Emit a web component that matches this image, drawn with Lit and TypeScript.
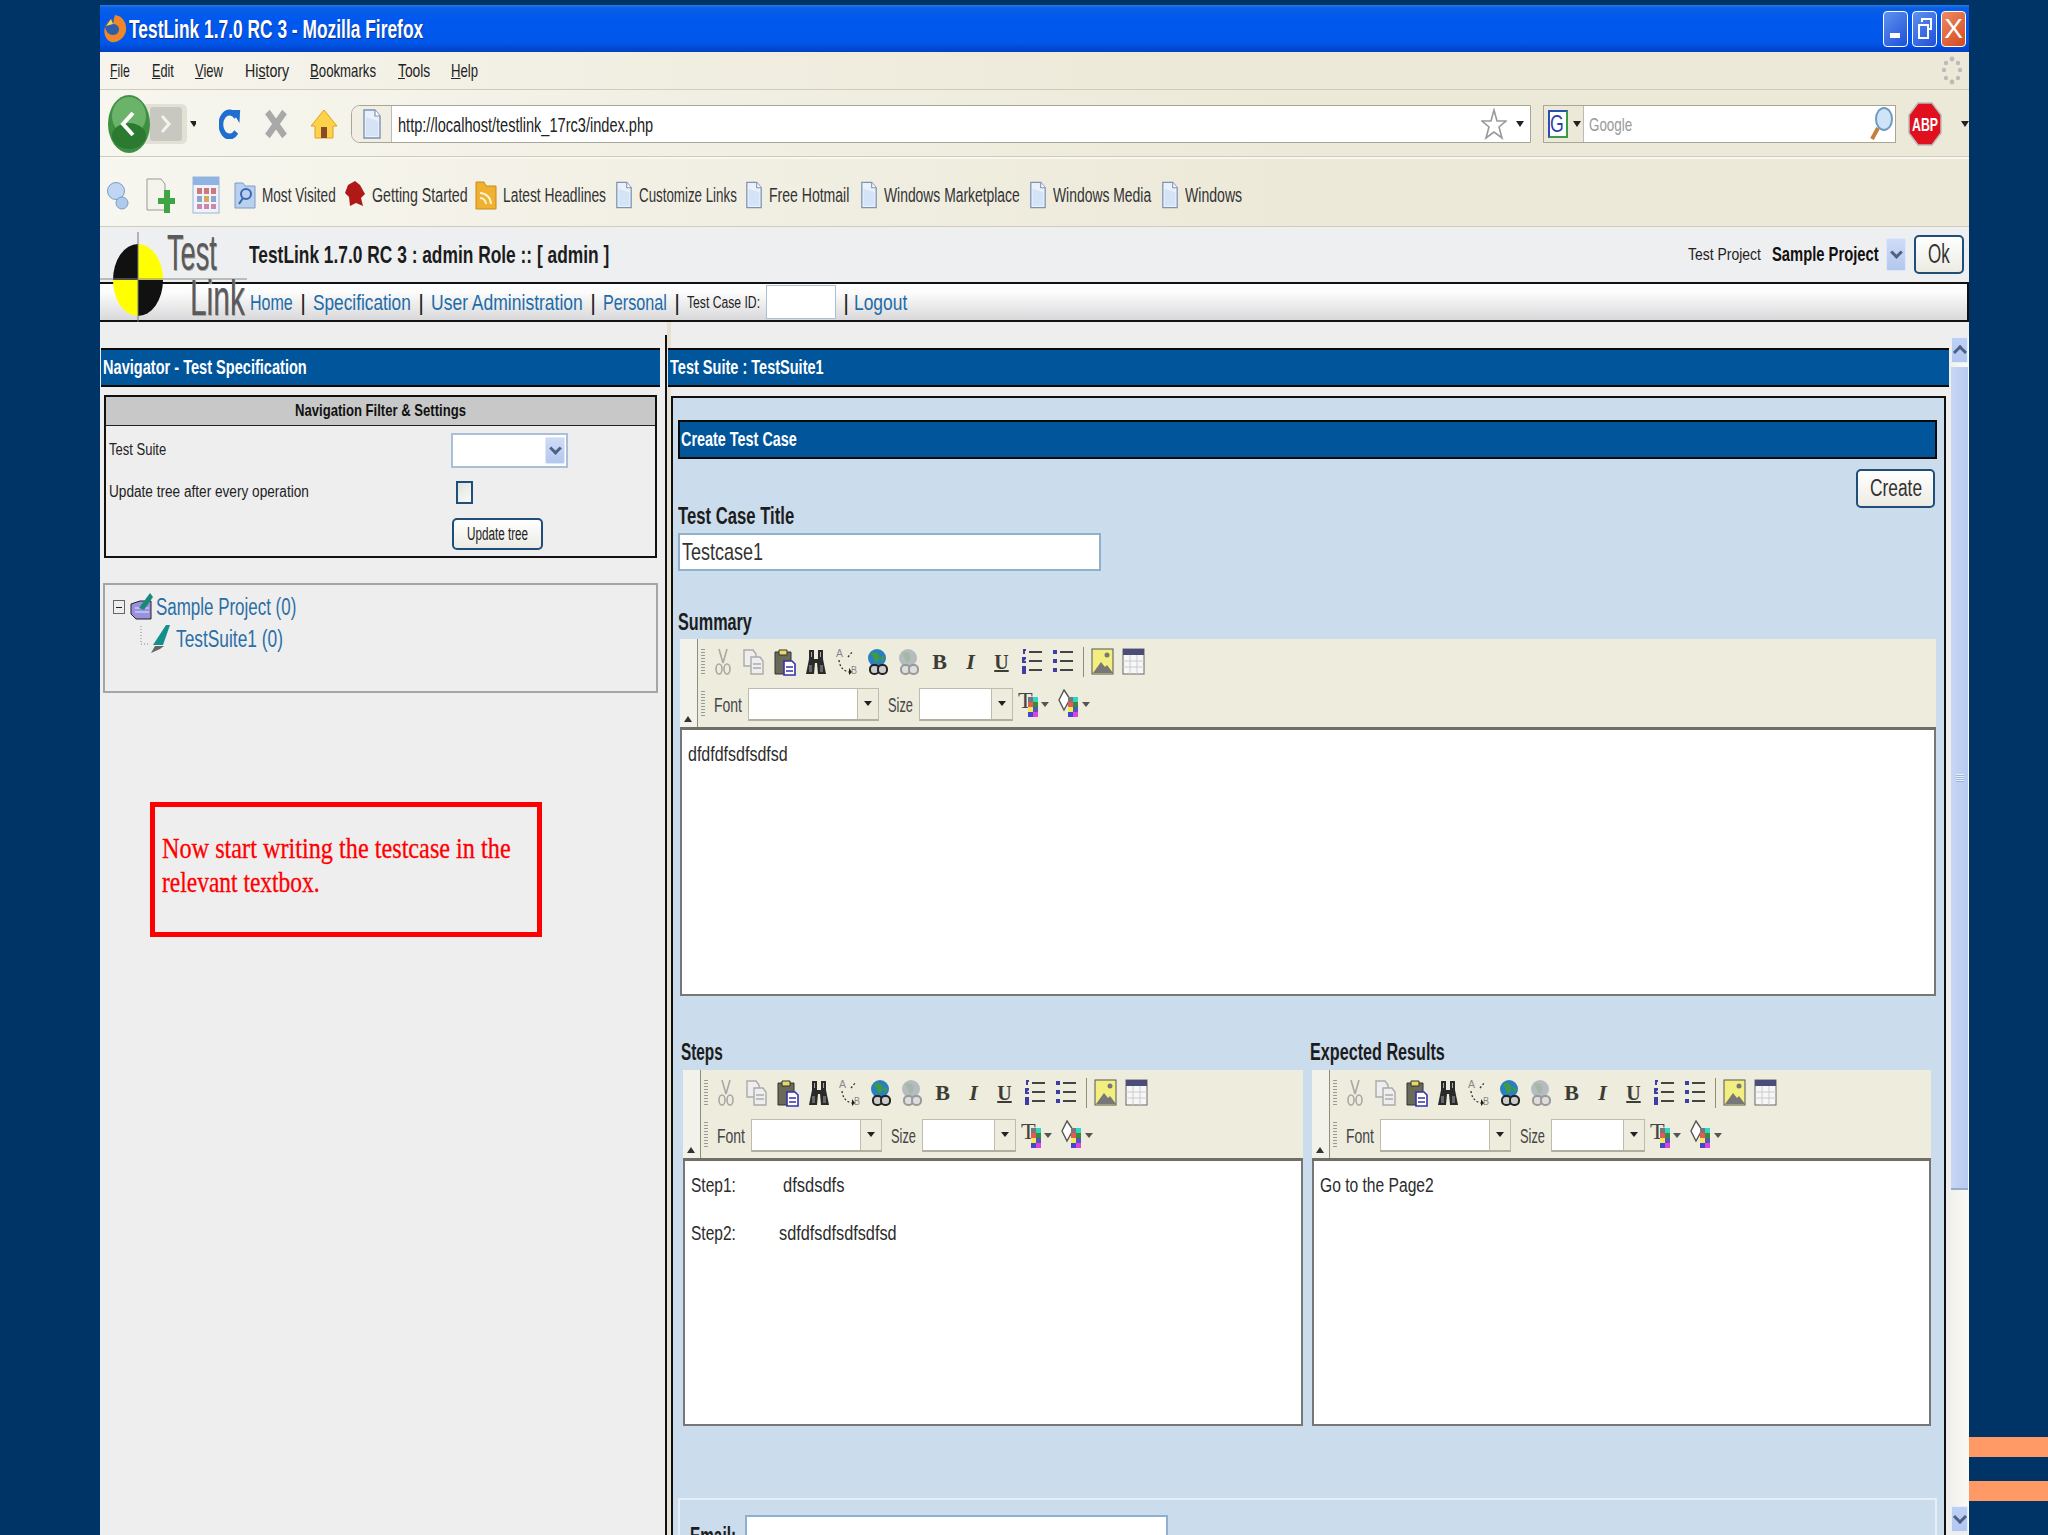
import { LitElement, html, css, svg } from "lit";
import { customElement, property } from "lit/decorators.js";

/* Text the original shows squeezed horizontally: fits its natural width to the measured one. */
@customElement("f-t")
class FitText extends LitElement {
  static styles = css`
    :host { display: inline-block; flex: none; white-space: nowrap; }
    span { display: inline-block; transform-origin: left center; }
  `;
  @property({ type: Number }) w = 0;
  render() {
    return html`<span><slot></slot></span>`;
  }
  updated() {
    const s = this.renderRoot.querySelector("span") as HTMLElement;
    this.style.width = `${this.w}px`;
    s.style.transform = `scaleX(${this.w / (s.offsetWidth || 1)})`;
  }
}

const doc = (w = 20, h = 30) => svg`<svg width=${w} height=${h} viewBox="0 0 20 30"><path d="M2 1h11l5 6v22H2z" fill="#eaf1fb" stroke="#7d93b5" stroke-width="1.4"/><path d="M13 1v6h5" fill="#fff" stroke="#7d93b5" stroke-width="1.2"/><path d="M4 8v19h12V12" fill="#d5e3f7"/></svg>`;

const ico: Record<string, unknown> = {
  cut: svg`<g fill="none" stroke="#a8a8a4" stroke-width="1.6"><path d="M8 1l4 14M16 1l-4 14"/><ellipse cx="8" cy="21" rx="3" ry="5"/><ellipse cx="16" cy="21" rx="3" ry="5"/></g>`,
  copy: svg`<g fill="#eee" stroke="#aaa" stroke-width="1.4"><path d="M2 2h9l3 4v12H2z"/><path d="M9 9h9l3 4v13H9z"/><path d="M11 16h8M11 20h8" /></g>`,
  paste: svg`<path d="M2 4h16v22H2z" fill="#6a6a58" stroke="#333"/><path d="M6 2h8v5H6z" fill="#e8d868" stroke="#333"/><path d="M11 13h8l3 3v11H11z" fill="#fff" stroke="#3333aa" stroke-width="1.6"/><path d="M13 19h7M13 23h7" stroke="#3333aa" stroke-width="1.6"/>`,
  find: svg`<path d="M5 2h5v9h4V2h5v9l3 15h-8l-1-11h-2l-1 11H2l3-15z" fill="#2a2a2a"/><path d="M7 4h1v5H7zM16 4h1v5h-1z" fill="#aaa"/><path d="M5 17h3v7H5zM16 17h3v7h-3z" fill="#666"/>`,
  replace: svg`<g fill="#888" font-family="Liberation Sans,sans-serif" font-size="10"><text x="1" y="9" textLength="7" lengthAdjust="spacingAndGlyphs">A</text><text x="16" y="26" textLength="6" lengthAdjust="spacingAndGlyphs">B</text></g><path d="M4 12q1 10 10 12M13 9l5-6" fill="none" stroke="#333" stroke-width="1.3" stroke-dasharray="2 2"/><path d="M14 20l3 4-3 3z" fill="#222"/>`,
  link: svg`<circle cx="11" cy="10" r="9" fill="#2a7fc0"/><path d="M5 5q6-3 8 2t-3 8zM14 8l5 1-3 5z" fill="#3f9a44"/><rect x="4" y="17" width="9" height="9" rx="4" fill="#ccc" stroke="#222" stroke-width="2"/><rect x="12" y="17" width="9" height="9" rx="4" fill="#ccc" stroke="#222" stroke-width="2"/>`,
  unlink: svg`<circle cx="11" cy="10" r="9" fill="#b4bcc0"/><path d="M5 5q6-3 8 2t-3 8z" fill="#a5b8a8"/><rect x="4" y="17" width="9" height="9" rx="4" fill="#ddd" stroke="#999" stroke-width="2"/><rect x="12" y="17" width="9" height="9" rx="4" fill="#ddd" stroke="#999" stroke-width="2"/>`,
  ol: svg`<path d="M8 4h13M8 13h13M8 22h13" stroke="#444" stroke-width="1.8"/><path d="M2 1h3v2H4v3H2zM1 9h4v2l-2 2h2v2H1zM1 18h4v8H1z" fill="#3d3da8"/>`,
  ul: svg`<path d="M8 4h13M8 13h13M8 22h13" stroke="#444" stroke-width="1.8"/><path d="M1 2h4v4H1zM1 11h4v4H1zM1 20h4v4H1z" fill="#3d3da8"/>`,
  image: svg`<rect x="1" y="1" width="21" height="25" fill="#f2ee80" stroke="#555"/><circle cx="16" cy="7" r="2.5" fill="#777"/><path d="M2 25l8-11 4 5 2-2 6 8z" fill="#777"/>`,
  table: svg`<rect x="1" y="1" width="21" height="25" fill="#f7f7f7" stroke="#666"/><rect x="1" y="1" width="21" height="6" fill="#4c4c78"/><path d="M1 13h21M1 19h21M8 7v19M15 7v19" stroke="#ccc"/>`,
};

const palette = svg`<rect x="10" y="8" width="5" height="5" fill="#777"/><rect x="15" y="8" width="5" height="5" fill="#2bd8c8"/><rect x="10" y="13" width="5" height="5" fill="#e55"/><rect x="15" y="13" width="5" height="5" fill="#3a8a3a"/><rect x="10" y="18" width="5" height="5" fill="#ee5"/><rect x="15" y="18" width="5" height="5" fill="#55b"/><rect x="10" y="23" width="5" height="5" fill="#44c"/><rect x="15" y="23" width="5" height="5" fill="#d4d"/>`;

@customElement("rte-editor")
class RteEditor extends LitElement {
  static styles = css`
    :host { display: block; font-family: "Liberation Sans", sans-serif; color: #333; }
    .bar { height: 91px; box-sizing: border-box; background: #eeecdd; border-bottom: 3px solid #6f6f66; display: flex; }
    .strip { width: 17px; border-right: 1px solid #8d8d80; position: relative; background: #f3f2ea; flex: none; }
    .strip::after { content: ""; position: absolute; left: 4px; bottom: 5px; border: 4px solid transparent; border-bottom: 6px solid #333; border-top: 0; }
    .rows { display: flex; flex-direction: column; padding-left: 3px; }
    .r1 { display: flex; align-items: center; height: 46px; }
    .r2 { display: flex; align-items: center; height: 38px; }
    .grip { width: 4px; height: 27px; margin-right: 2px; background: repeating-linear-gradient(#999 0 1px, transparent 1px 3px); flex: none; }
    .cell { width: 31px; display: flex; justify-content: center; align-items: center; height: 30px; flex: none; }
    .cell.fmt { font: bold 22px "Liberation Serif", serif; color: #3c3c34; }
    .cell.i { font-style: italic; }
    .cell.u { text-decoration: underline; font-size: 20px; }
    .sep { width: 8px; display: flex; justify-content: center; flex: none; }
    .sep i { width: 1px; height: 30px; background: #8f8f74; }
    .lbl { font-size: 21px; color: #444; margin-left: 7px; padding-top: 2px; }
    .lbl + .sel + .lbl { margin-left: 9px; }
    .sel { height: 33px; box-sizing: border-box; background: #fff; border: 1px solid #bdbcae; border-bottom: 2px solid #b0af9f; margin-left: 6px; display: flex; justify-content: flex-end; flex: none; }
    .sel b { width: 20px; background: #eeecdd; border-left: 1px solid #bdbcae; display: flex; align-items: center; justify-content: center; }
    .sel b::after, .dd::after { content: ""; border: 4px solid transparent; border-top: 5px solid #222; border-bottom: 0; }
    .f { width: 131px; }
    .s { width: 94px; }
    .clr { display: flex; align-items: center; margin-left: 5px; flex: none; }
    .clr2 { margin-left: 8px; }
    .dd { width: 9px; display: flex; justify-content: center; }
    .clr .dd::after { border-top-color: #555; }
    .body { background: #fff; border: solid #777; border-width: 0 2px 2px 2px; box-sizing: border-box; padding: 13px 6px 0; font-size: 20px; color: #2c2c2c; line-height: 22px; }
  `;
  @property({ type: Number }) bh = 267;
  render() {
    const cells = ["cut", "copy", "paste", "find", "replace", "link", "unlink"];
    return html`
      <div class="bar">
        <div class="strip"></div>
        <div class="rows">
          <div class="r1">
            <div class="grip"></div>
            ${cells.map((c) => html`<div class="cell"><svg width="24" height="28" viewBox="0 0 24 28">${ico[c]}</svg></div>`)}
            <div class="cell fmt">B</div><div class="cell fmt i">I</div><div class="cell fmt u">U</div>
            <div class="cell"><svg width="24" height="28" viewBox="0 0 24 28">${ico.ol}</svg></div>
            <div class="cell"><svg width="24" height="28" viewBox="0 0 24 28">${ico.ul}</svg></div>
            <div class="sep"><i></i></div>
            <div class="cell"><svg width="24" height="28" viewBox="0 0 24 28">${ico.image}</svg></div>
            <div class="cell"><svg width="24" height="28" viewBox="0 0 24 28">${ico.table}</svg></div>
          </div>
          <div class="r2">
            <div class="grip"></div>
            <f-t class="lbl" w="28">Font</f-t><div class="sel f"><b></b></div>
            <f-t class="lbl" w="25">Size</f-t><div class="sel s"><b></b></div>
            <div class="clr"><svg width="22" height="30" viewBox="0 0 22 30"><text x="0" y="19" font-family="Liberation Serif" font-size="24" fill="#444">T</text>${palette}</svg><span class="dd"></span></div>
            <div class="clr clr2"><svg width="24" height="30" viewBox="0 0 22 30"><path d="M6 1l6 9-6 11-5-10z" fill="#fff" stroke="#555" stroke-width="1.4"/>${palette}</svg><span class="dd"></span></div>
          </div>
        </div>
      </div>
      <div class="body" style="height:${this.bh}px"><slot></slot></div>`;
  }
}

@customElement("app-root")
export class AppRoot extends LitElement {
  static styles = css`
    :host { display: block; width: 2048px; height: 1535px; overflow: hidden; background: #003366; position: relative; font-family: "Liberation Sans", sans-serif; }
    .stripe { position: absolute; left: 1969px; width: 79px; height: 20px; background: #ff9966; }
    .s1 { top: 1437px; } .s2 { top: 1481px; }
    .win { margin-left: 100px; width: 1869px; height: 1530px; position: relative; top: 5px; display: flex; flex-direction: column; overflow: hidden; background: #eeeeef; }
    .title { height: 47px; flex: none; display: flex; align-items: center; padding-left: 3px; background: linear-gradient(#1f7fe8 0, #0b5fe6 6%, #0058ee 30%, #0057ea 80%, #0041c4 100%); color: #fff; font-size: 25px; font-weight: bold; text-shadow: 1px 1px #0a2f90; }
    .title f-t { margin-left: 2px; padding-top: 2px; }
    .wb { margin-left: auto; display: flex; gap: 4px; padding-right: 3px; }
    .wb div { width: 25px; height: 36px; box-sizing: border-box; border: 1px solid #fff; border-radius: 4px; background: linear-gradient(135deg, #5f92ee, #1f50d8); display: flex; align-items: center; justify-content: center; }
    .wb .x { background: linear-gradient(135deg, #ef8a62, #d24a20); color: #fff; font-size: 28px; font-weight: normal; text-shadow: none; }
    .menu { height: 37px; flex: none; display: flex; align-items: center; gap: 21.5px; padding-left: 10px; background: linear-gradient(90deg, #f6f4ec, #ecE9d8 60%); border-bottom: 1px solid #cfccba; font-size: 19px; color: #222; }
    .spin { margin-left: auto; margin-right: 7px; }
    .nav { height: 67px; flex: none; display: flex; align-items: center; padding-left: 6px; background: linear-gradient(90deg, #f7f6ef, #ece9d8 65%); border-bottom: 2px solid #f8f7f1; box-shadow: inset 0 -1px #cfccba; }
    .ml22 { margin-left: 22px; } .ml13 { margin-left: 13px; } .ml12 { margin-left: 12px; }
    .rl { margin-left: 23px; } .st { margin-left: 23px; }
    .url { width: 1180px; height: 38px; box-sizing: border-box; background: #fff; border: 1px solid #a8a697; border-radius: 9px 0 0 9px; display: flex; align-items: center; font-size: 20px; color: #222; }
    .url .pg { width: 39px; height: 36px; background: #f1efe4; border-right: 1px solid #bbb; display: flex; align-items: center; justify-content: center; border-radius: 9px 0 0 9px; flex: none; }
    .url .tx { margin-left: 6px; flex: 1; padding-top: 3px; }
    .tri { width: 0; height: 0; border: 4px solid transparent; border-top: 6px solid #222; border-bottom: 0; display: block; flex: none; }
    .url .tri { margin: 0 6px 0 9px; }
    .search { width: 353px; height: 38px; box-sizing: border-box; background: #fff; border: 1px solid #a8a697; display: flex; align-items: center; font-size: 19px; color: #999; }
    .search .eng { width: 40px; height: 36px; background: #ecE9d8; border-right: 1px solid #bbb; display: flex; align-items: center; padding-left: 4px; gap: 5px; box-sizing: border-box; flex: none; }
    .gbox { width: 20px; height: 28px; box-sizing: border-box; background: #fff; border: 2px solid; border-color: #2a4fb0 #3a9a48 #3a9a48 #2a4fb0; font-size: 24px; line-height: 24px; color: #2a3fa8; text-align: left; }
    .search .g { margin-left: 5px; flex: 1; padding-top: 3px; }
    .abp { margin-left: 12px; }
    .abpt { margin-left: 19px; }
    .bm { height: 68px; flex: none; display: flex; align-items: center; padding-left: 7px; padding-top: 5px; box-sizing: border-box; background: linear-gradient(90deg, #f7f6ef, #ece9d8 65%); border-bottom: 1px solid #cfccba; font-size: 20px; color: #333; }
    .bm f-t { margin-left: 6px; }
    .ic1 { margin-left: 16px; } .ic2 { margin-left: 17px; } .ic3 { margin-left: 14px; }
    .it { flex: none; display: flex; }
    .hdr { height: 55px; flex: none; display: flex; align-items: center; padding-left: 149px; background: #eeeff0; }
    .hdr .h { font-size: 24px; font-weight: bold; color: #1c1c1c; }
    .hdr .tp { margin-left: auto; font-size: 17px; color: #222; }
    .hdr .sp { margin-left: 11px; font-size: 20px; font-weight: bold; color: #111; }
    .arrow { width: 20px; height: 33px; box-sizing: border-box; background: linear-gradient(#cfdcf6, #b3c7ee); border: 1px solid #dfe8fa; border-radius: 2px; display: flex; align-items: center; justify-content: center; flex: none; }
    .arrow::after { content: ""; width: 6px; height: 6px; border: solid #4d6185; border-width: 0 3px 3px 0; transform: translateY(-2px) rotate(45deg); }
    .hdr .arrow { margin-left: 7px; }
    .ok { margin: 0 5px 0 8px; width: 50px; height: 39px; box-sizing: border-box; border: 2px solid #1f4e79; border-radius: 5px; background: linear-gradient(#fff, #ecebe3); font-size: 27px; color: #333; display: flex; align-items: center; justify-content: center; }
    .nb { height: 40px; flex: none; box-sizing: border-box; border: solid #111; border-width: 2px 2px 2px 0; display: flex; align-items: center; padding-left: 150px; background: linear-gradient(#fff, #fbfbfb 25%, #d9d9db); font-size: 22px; color: #1d6ba8; }
    .nb f-t, .nb i { padding-top: 2px; }
    .nb i { font-style: normal; color: #222; width: 20px; text-align: center; flex: none; }
    .nb .small { font-size: 16px; color: #222; }
    .nb .inp { width: 70px; height: 34px; box-sizing: border-box; background: #fff; border: 1px solid #a9c0d8; margin-left: 6px; flex: none; }
    .nb .lo { margin-left: -2px; }
    .logo { position: absolute; left: 0; top: 222px; width: 150px; height: 95px; pointer-events: none; }
    .lt1, .lt2 { position: absolute; color: #5a5a5a; font-size: 50px; line-height: 40px; text-shadow: 1px 1px #aaa; }
    .lt1 { left: 67px; top: 6px; }
    .lt2 { left: 90px; top: 51px; }
    .main { flex: 1; display: flex; min-height: 0; }
    .left { width: 565px; flex: none; padding-top: 26px; box-sizing: border-box; position: relative; }
    .bluebar { height: 39px; box-sizing: border-box; background: #00559b; border: solid #0a0a0a; border-width: 2px 0; color: #fff; font-size: 20px; font-weight: bold; display: flex; align-items: center; }
    .left .bluebar { margin: 0 5px 0 1px; padding-left: 2px; }
    .filter { margin: 8px 8px 0 4px; height: 163px; box-sizing: border-box; border: 2px solid #111; }
    .fh { height: 29px; background: #c8c8c8; border-bottom: 1px solid #222; box-sizing: border-box; display: flex; align-items: center; justify-content: center; font-size: 17px; font-weight: bold; color: #111; }
    .frow { display: grid; grid-template-columns: 342px 1fr; align-items: center; padding-left: 3px; font-size: 16px; color: #222; height: 42px; }
    .frow.first { margin-top: 3px; }
    .sel { width: 117px; height: 35px; box-sizing: border-box; background: #fff; border: 2px solid #a9c0d8; display: flex; justify-content: flex-end; align-items: stretch; padding: 2px 1px; }
    .sel .arrow { height: auto; }
    .cb { width: 17px; height: 23px; box-sizing: border-box; border: 2px solid #1f4e79; background: linear-gradient(135deg, #dfe3df, #fbfbf8); margin-left: 5px; }
    .ub { width: 91px; height: 32px; box-sizing: border-box; border: 2px solid #1f4e79; border-radius: 5px; background: linear-gradient(#fff, #ecebe3); margin-left: 1px; font-size: 18px; color: #222; display: flex; align-items: center; justify-content: center; }
    .tree { margin: 25px 7px 0 3px; height: 110px; box-sizing: border-box; border: 2px solid #a5a5a7; padding: 6px 0 0 8px; font-size: 23px; color: #2a6fa5; }
    .tr { display: flex; align-items: center; height: 32px; white-space: nowrap; }
    .tr2 { padding-left: 27px; }
    .minus { width: 12px; height: 14px; box-sizing: border-box; border: 1px solid #666; display: flex; align-items: center; justify-content: center; flex: none; margin-right: 5px; }
    .minus::after { content: ""; width: 6px; height: 1px; background: #222; }
    .tr svg { flex: none; margin-right: 1px; }
    .tr1t { margin-left: 1px; }
    .tr2t { margin-left: 3px; }
    .note { position: absolute; left: 50px; top: 480px; width: 392px; height: 135px; box-sizing: border-box; border: 5px solid #f00; color: #f00; font: 30px/34px "Liberation Serif", serif; -webkit-text-stroke: .3px #f00; padding: 24px 0 0 7px; }
    .note f-t { display: block; }
    .divider { width: 2px; margin-top: 13px; background: #111; flex: none; }
    .right { flex: 1; min-width: 0; display: flex; }
    .rc { width: 1282px; flex: none; padding-top: 26px; box-sizing: border-box; background: linear-gradient(90deg, #e6e2d2 0 4px, #eeeeef 4px); }
    .rc .bluebar { margin-left: 1px; padding-left: 2px; }
    .panel { margin: 9px 3px 0 4px; height: 1200px; box-sizing: border-box; border: 2px solid #111; background: #cbdcec; padding: 22px 0 0 5px; }
    .cbar { width: 1259px; height: 39px; box-sizing: border-box; background: #00559b; border: 2px solid #0a0a0a; color: #fff; font-size: 20px; font-weight: bold; display: flex; align-items: center; padding-left: 1px; }
    .cr { display: flex; justify-content: flex-end; width: 1257px; margin-top: 10px; }
    .crb { width: 79px; height: 39px; box-sizing: border-box; border: 2px solid #1f4e79; border-radius: 5px; background: linear-gradient(#fff, #ecebe3); font-size: 23px; color: #333; display: flex; align-items: center; justify-content: center; }
    .lb { font-size: 23px; font-weight: bold; color: #1c1c1c; display: flex; align-items: center; }
    .lb1 { height: 25px; padding-bottom: 8px; box-sizing: border-box; }
    .ti { width: 423px; height: 38px; box-sizing: border-box; background: #fff; border: 2px solid #8fb0cf; font-size: 24px; color: #333; padding-left: 2px; display: flex; align-items: center; }
    .lb2 { height: 34px; margin-top: 34px; }
    .ed1 { margin-left: 2px; width: 1256px; }
    .two { display: flex; margin-top: 39px; margin-left: 5px; }
    .col1 { width: 629px; }
    .col1 rte-editor { width: 620px; }
    .col2 { width: 619px; }
    .two .lb { height: 35px; margin-left: -2px; }
    .step { display: flex; }
    .step .k { width: 92px; flex: none; }
    .step + .step { margin-top: 26px; }
    .step.b .k { width: 88px; }
    .foot { margin-top: 72px; width: 1259px; height: 100px; box-sizing: border-box; border: 2px solid #e6eff7; display: flex; align-items: flex-start; padding: 15px 0 0 10px; }
    .foot .lb { height: 38px; width: 55px; padding-top: 5px; box-sizing: border-box; flex: none; }
    .foot .em { width: 423px; height: 40px; box-sizing: border-box; background: #fff; border: 2px solid #8fb0cf; }
    .scroll { width: 19px; margin: 15px 0 3px 1px; display: flex; flex-direction: column; background: linear-gradient(90deg, #f1f0ea, #fbfaf7); flex: none; }
    .sb { width: 17px; height: 26px; box-sizing: border-box; margin-left: 1px; background: linear-gradient(#bfd0f4, #b2c6ef); border: 1px solid #e6edfb; display: flex; align-items: center; justify-content: center; flex: none; }
    .sb::after { content: ""; width: 7px; height: 7px; border: solid #4d6185; border-width: 3px 0 0 3px; transform: translateY(2px) rotate(45deg); }
    .sb.dn { margin-top: auto; }
    .sb.dn::after { transform: translateY(-2px) rotate(225deg); }
    .thumb { margin: 4px 0 0 1px; width: 17px; height: 823px; flex: none; box-sizing: border-box; background: linear-gradient(90deg, #c8d6f5, #b8caf0); border-bottom: 2px solid #9aaccc; display: flex; align-items: center; justify-content: center; }
    .thumb::after { content: ""; width: 8px; height: 8px; background: repeating-linear-gradient(#e6edfb 0 1px, #9fb4dc 1px 2px); }
  `;

  render() {
    return html`
      <div class="stripe s1"></div><div class="stripe s2"></div>
      <div class="win">
        <div class="title">
          <svg width="24" height="32" viewBox="0 0 24 32"><circle cx="12" cy="16" r="11" fill="#2f5da8"/><path d="M12 2c8 1 12 8 11 16-2 8-9 12-15 11C3 27 0 21 2 14c1 5 4 8 8 8s6-3 6-6-3-5-6-5c1-4 1-7 2-9z" fill="#f0862a"/><path d="M3 13l5-7 2 5z" fill="#ffcf50"/></svg>
          <f-t w="294">TestLink 1.7.0 RC 3 - Mozilla Firefox</f-t>
          <div class="wb">
            <div><svg width="14" height="20" viewBox="0 0 14 20"><rect x="1" y="14" width="10" height="5" fill="#fff"/></svg></div>
            <div><svg width="16" height="24" viewBox="0 0 16 24"><path d="M5 5V2h9v10h-3" fill="none" stroke="#fff" stroke-width="2"/><rect x="2" y="8" width="9" height="13" fill="none" stroke="#fff" stroke-width="2"/></svg></div>
            <div class="x">X</div>
          </div>
        </div>
        <div class="menu">
          <f-t w="20"><u>F</u>ile</f-t><f-t w="22"><u>E</u>dit</f-t><f-t w="28"><u>V</u>iew</f-t><f-t w="44">Hi<u>s</u>tory</f-t><f-t w="66"><u>B</u>ookmarks</f-t><f-t w="32"><u>T</u>ools</f-t><f-t w="27"><u>H</u>elp</f-t>
          <svg class="spin" width="20" height="29" viewBox="0 0 20 29" fill="#bbb"><circle cx="10" cy="3" r="2.4"/><circle cx="16" cy="7" r="2.2"/><circle cx="18" cy="14" r="2.2"/><circle cx="16" cy="22" r="2.2"/><circle cx="10" cy="26" r="2.4"/><circle cx="4" cy="22" r="2.2"/><circle cx="2" cy="14" r="2.2"/><circle cx="4" cy="7" r="2.2"/></svg>
        </div>
        <div class="nav">
          <svg width="90" height="60" viewBox="0 0 90 60">
            <path d="M30 10h45q6 0 6 6v28q0 6-6 6H30z" fill="#e3e1d6"/>
            <rect x="44" y="13" width="32" height="34" rx="3" fill="#c9c8c0"/>
            <path d="M56 22l7 8-7 8" fill="none" stroke="#f2f2ee" stroke-width="3"/>
            <ellipse cx="23" cy="30" rx="21" ry="29" fill="#3f8f42"/><ellipse cx="23" cy="22" rx="17" ry="19" fill="#6cb36a"/><ellipse cx="23" cy="42" rx="17" ry="13" fill="#2a7a30"/>
            <path d="M27 19l-10 11 10 11" fill="none" stroke="#fff" stroke-width="4"/>
            <path d="M84 27h8l-4 6z" fill="#222"/>
          </svg>
          <svg class="rl" width="22" height="30" viewBox="0 0 28 30" preserveAspectRatio="none"><path d="M22 8A11 12 0 1 0 22 23" fill="none" stroke="#1f6fd0" stroke-width="6"/><path d="M16 1l11 0-1 13z" fill="#1f6fd0"/></svg>
          <svg class="st" width="24" height="30" viewBox="0 0 28 30" preserveAspectRatio="none"><path d="M4 3l20 24M24 3L4 27" stroke="#a9a9a9" stroke-width="7"/></svg>
          <svg class="ml22" width="28" height="30" viewBox="0 0 28 30"><path d="M14 1L1 17h4v12h18V17h4z" fill="#fbd24a" stroke="#e3a020"/><rect x="11" y="18" width="6" height="11" fill="#8a4a28"/></svg>
          <div class="url ml13">
            <div class="pg">${doc()}</div>
            <div class="tx"><f-t w="255">http://localhost/testlink_17rc3/index.php</f-t></div>
            <svg width="26" height="32" viewBox="0 0 26 32"><path d="M13 2l3 11 9 0-7 6 3 11-8-6-8 6 3-11-7-6 9 0z" fill="#fff" stroke="#999" stroke-width="1.6"/></svg>
            <span class="tri"></span>
          </div>
          <div class="search ml12">
            <div class="eng"><div class="gbox"><f-t w="14">G</f-t></div><span class="tri"></span></div>
            <div class="g"><f-t w="43">Google</f-t></div>
            <svg width="24" height="34" viewBox="0 0 24 34" style="margin-right:2px"><ellipse cx="15" cy="12" rx="8" ry="11" fill="#cfe4f7" stroke="#6f9bc4" stroke-width="2"/><path d="M9 21L3 32" stroke="#c08040" stroke-width="4"/></svg>
          </div>
          <svg class="abp" width="34" height="44" viewBox="0 0 34 44"><path d="M10 1h14l9 12v18l-9 12H10L1 31V13z" fill="#e0101e" stroke="#bbb" stroke-width="1.5"/><text x="4" y="29" textLength="26" lengthAdjust="spacingAndGlyphs" font-family="Liberation Sans,sans-serif" font-weight="bold" font-size="19" fill="#fff">ABP</text></svg>
          <span class="tri abpt"></span>
        </div>
        <div class="bm">
          <svg width="22" height="30" viewBox="0 0 22 30"><circle cx="9" cy="11" r="8.5" fill="#c0d6f2" stroke="#7f9cc4"/><circle cx="15" cy="23" r="6" fill="#aecbec" stroke="#7f9cc4"/></svg>
          <svg class="ic1" width="30" height="40" viewBox="0 0 30 40"><path d="M2 4h14l4 5v26H2z" fill="#f4f3ec" stroke="#999"/><path d="M19 15h6v8h5v6h-5v9h-6v-9h-6v-6h6z" fill="#3fa544"/></svg>
          <svg class="ic2" width="28" height="38" viewBox="0 0 28 38"><rect x="1" y="1" width="26" height="36" fill="#eef3fb" stroke="#9ab4d4"/><rect x="1" y="1" width="26" height="8" fill="#8fb3e2"/><path d="M5 12h5v6H5zM12 12h5v6h-5zM19 12h5v6h-5z" fill="#d07878"/><path d="M5 20h5v6H5zM19 20h5v6h-5z" fill="#88a8cc"/><path d="M12 20h5v6h-5z" fill="#d8a860"/><path d="M5 28h5v5H5zM12 28h5v5h-5zM19 28h5v5h-5z" fill="#cc88aa"/></svg>
          <svg class="ic3" width="22" height="28" viewBox="0 0 22 28"><path d="M1 2h8l2 3h10v22H1z" fill="#b9d0ef" stroke="#7f9cc4"/><circle cx="12" cy="13" r="5" fill="none" stroke="#3a66b0" stroke-width="2"/><path d="M9 17l-4 6" stroke="#3a66b0" stroke-width="2"/></svg>
          <f-t w="74">Most Visited</f-t>
          <svg style="margin-left:8px" width="22" height="30" viewBox="0 0 22 30"><path d="M11 1l5 4 5 9-4 4 2 8-7-3-6 3-1-9-4-4 3-8z" fill="#b01818"/></svg>
          <f-t w="96">Getting Started</f-t>
          <svg style="margin-left:7px" width="22" height="30" viewBox="0 0 22 30"><path d="M1 2h8l2 4h10v23H1z" fill="#f0b030" stroke="#c88a18"/><path d="M5 13a11 11 0 0 1 11 11M5 18a6 6 0 0 1 6 6" fill="none" stroke="#fff4cc" stroke-width="2"/></svg>
          <f-t w="103">Latest Headlines</f-t>
          ${([["Customize Links", 98, 9], ["Free Hotmail", 80, 8], ["Windows Marketplace", 136, 11], ["Windows Media", 98, 9], ["Windows", 57, 10]] as [string, number, number][]).map(
            ([t, w, m]) => html`<span class="it" style="margin-left:${m}px">${doc(18, 28)}</span><f-t .w=${w}>${t}</f-t>`
          )}
        </div>
        <div class="hdr">
          <f-t class="h" w="360">TestLink 1.7.0 RC 3 : admin Role :: [ admin ]</f-t>
          <f-t class="tp" w="73">Test Project</f-t><f-t class="sp" w="107">Sample Project</f-t>
          <div class="arrow"></div><div class="ok"><f-t w="22">Ok</f-t></div>
        </div>
        <div class="nb">
          <f-t w="43">Home</f-t><i>|</i><f-t w="98">Specification</f-t><i>|</i><f-t w="152">User Administration</f-t><i>|</i><f-t w="64">Personal</f-t><i>|</i>
          <f-t class="small" w="73">Test Case ID:</f-t><div class="inp"></div><i>|</i><f-t class="lo" w="53">Logout</f-t>
        </div>
        <div class="main">
          <div class="left">
            <div class="bluebar"><f-t w="204">Navigator - Test Specification</f-t></div>
            <div class="filter">
              <div class="fh"><f-t w="171">Navigation Filter &amp; Settings</f-t></div>
              <div class="frow first"><f-t w="57">Test Suite</f-t><div class="sel"><div class="arrow"></div></div></div>
              <div class="frow"><f-t w="200">Update tree after every operation</f-t><div class="cb"></div></div>
              <div class="frow"><span></span><div class="ub"><f-t w="61">Update tree</f-t></div></div>
            </div>
            <div class="tree">
              <div class="tr"><span class="minus"></span>
                <svg width="24" height="30" viewBox="0 0 24 30"><path d="M1 12l9-3h11v18H6l-5-5z" fill="#9a90e0" stroke="#222"/><path d="M5 16h14M5 20h14" stroke="#e8e6fa"/><path d="M9 16L20 1l3 4-9 13z" fill="#1a8a78"/></svg>
                <f-t class="tr1t" w="140">Sample Project (0)</f-t></div>
              <div class="tr tr2">
                <svg width="9" height="26" viewBox="0 0 9 26"><path d="M1 0v18h8" fill="none" stroke="#888" stroke-dasharray="1 2"/></svg>
                <svg width="22" height="32" viewBox="0 0 22 32"><path d="M3 22L16 2h4l-7 20z" fill="#14908a"/><path d="M1 30l4-7h9l-4 3z" fill="#666"/></svg>
                <f-t class="tr2t" w="107">TestSuite1 (0)</f-t></div>
            </div>
            <div class="note"><f-t w="349">Now start writing the testcase in the</f-t><f-t w="158">relevant textbox.</f-t></div>
          </div>
          <div class="divider"></div>
          <div class="right">
            <div class="rc">
              <div class="bluebar"><f-t w="154">Test Suite : TestSuite1</f-t></div>
              <div class="panel">
                <div class="cbar"><f-t w="116">Create Test Case</f-t></div>
                <div class="cr"><div class="crb"><f-t w="52">Create</f-t></div></div>
                <div class="lb lb1"><f-t w="116">Test Case Title</f-t></div>
                <div class="ti"><f-t w="81">Testcase1</f-t></div>
                <div class="lb lb2"><f-t w="74">Summary</f-t></div>
                <rte-editor class="ed1" bh="266"><f-t w="100">dfdfdfsdfsdfsd</f-t></rte-editor>
                <div class="two">
                  <div class="col1">
                    <div class="lb"><f-t w="42">Steps</f-t></div>
                    <rte-editor bh="265">
                      <div class="step"><span class="k"><f-t w="45">Step1:</f-t></span><f-t w="61">dfsdsdfs</f-t></div>
                      <div class="step b"><span class="k"><f-t w="45">Step2:</f-t></span><f-t w="118">sdfdfsdfsdfsdfsd</f-t></div>
                    </rte-editor>
                  </div>
                  <div class="col2">
                    <div class="lb"><f-t w="135">Expected Results</f-t></div>
                    <rte-editor bh="265"><f-t w="114">Go to the Page2</f-t></rte-editor>
                  </div>
                </div>
                <div class="foot"><div class="lb"><f-t w="46">Email:</f-t></div><div class="em"></div></div>
              </div>
            </div>
            <div class="scroll"><div class="sb"></div><div class="thumb"></div><div class="sb dn"></div></div>
          </div>
        </div>
        <div class="logo">
          <svg width="150" height="95" viewBox="0 0 150 95" style="position:absolute;left:0;top:0">
            <path d="M38 17a25 36 0 0 0-25 36h25z" fill="#111"/><path d="M38 17a25 36 0 0 1 25 36H38z" fill="#ff0"/>
            <path d="M13 53a25 36 0 0 0 25 36V53z" fill="#ff0"/><path d="M63 53a25 36 0 0 1-25 36V53z" fill="#111"/>
            <path d="M38 5v90" stroke="#777"/><path d="M0 52h147" stroke="#888"/>
          </svg>
          <f-t class="lt1" w="50">Test</f-t><f-t class="lt2" w="55">Link</f-t>
        </div>
      </div>
    `;
  }
}
